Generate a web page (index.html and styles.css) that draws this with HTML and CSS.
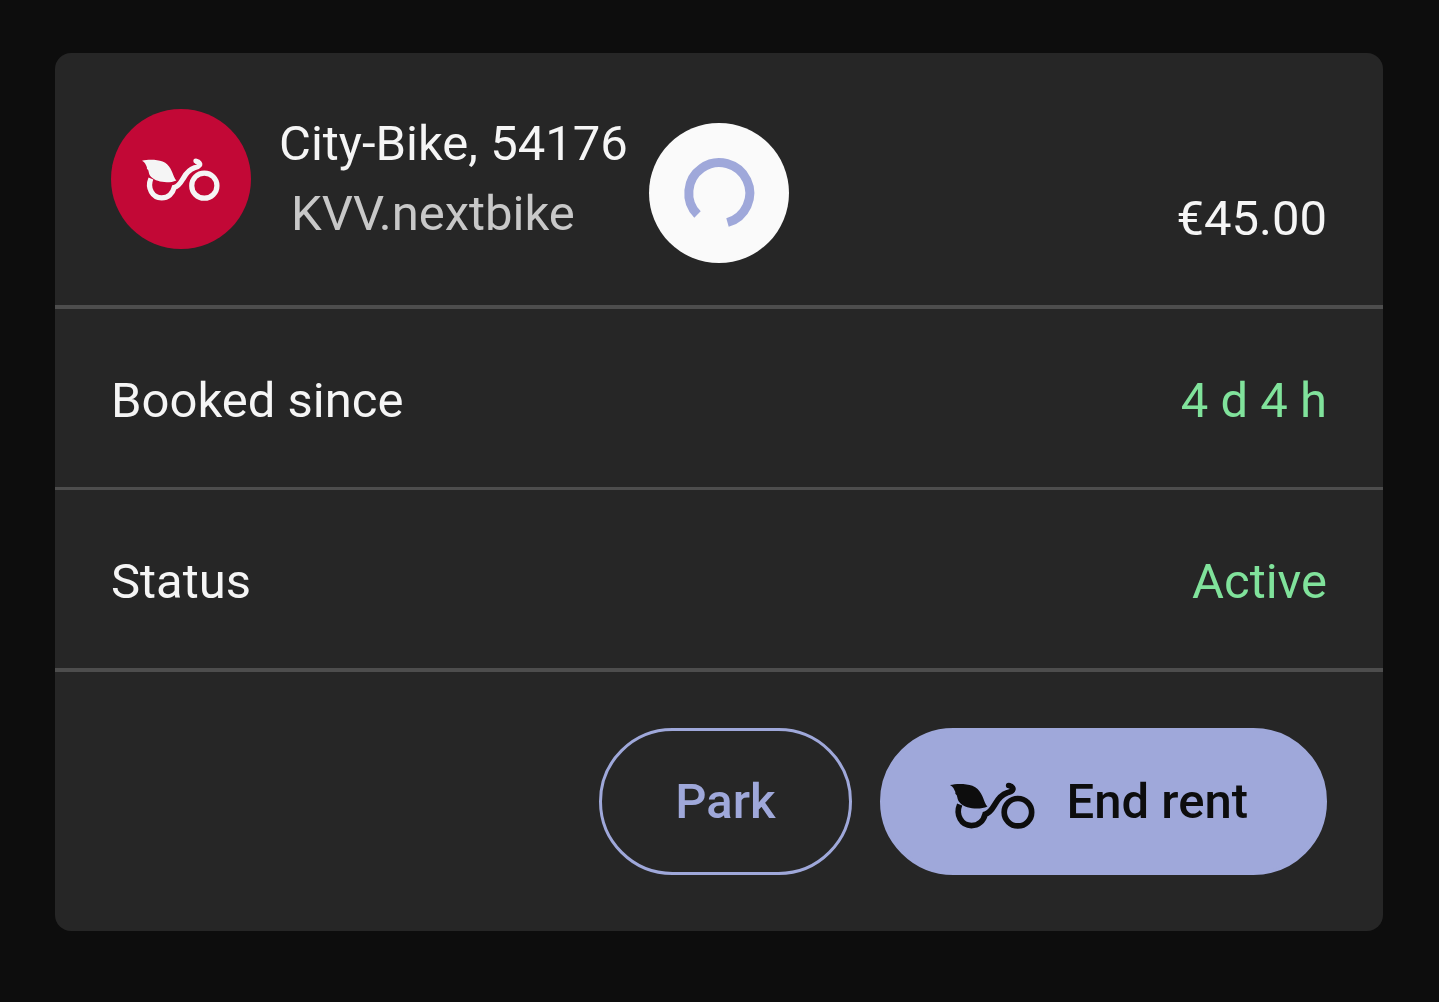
FILE: index.html
```html
<!DOCTYPE html>
<html lang="en">
<head>
  <meta charset="utf-8">
  <meta name="viewport" content="width=device-width, initial-scale=1">
  <title>City-Bike, 54176</title>
  <link rel="stylesheet" href="styles.css">
</head>
<body>
  <svg class="icon-defs" aria-hidden="true">
    <symbol id="bike" viewBox="60 66 254 140">
      <path fill="currentColor" d="M60 75 C78 70 107 70 127 77 C152 87 158 112 164 126 Q167 134 172 139 C145 151 106 144 91 129 C81 119 83 111 80 105 Q74 102 76 96 C72 87 70 80 60 75 Z"/>
      <path fill="none" stroke="currentColor" stroke-width="17" d="M89 133 C76 164 94 196 124 196 C145 196 160 182 165 162 C180 158 187 145 194 133 C203 117 213 104 231 98 C247 94 253 87 243 79 L235 76"/>
      <circle fill="currentColor" cx="235" cy="76" r="8"/>
      <circle fill="none" stroke="currentColor" stroke-width="17" cx="263" cy="156" r="41"/>
    </symbol>
  </svg>

  <main class="card">
    <header class="card-header">
      <div class="avatar">
        <svg class="avatar-icon" aria-hidden="true"><use href="#bike"/></svg>
      </div>
      <div class="title">
        <h1>City-Bike, 54176</h1>
        <p>KVV.nextbike</p>
      </div>
      <div class="price">€45.00</div>
      <div class="loader" role="status" aria-label="Loading">
        <svg viewBox="0 0 140 140" aria-hidden="true">
          <path fill="none" stroke="#9fa8da" stroke-width="9" d="M48.5 91.5 A30.5 30.5 0 1 1 78.5 99.5"/>
        </svg>
      </div>
    </header>

    <dl class="details">
      <div class="row">
        <dt>Booked since</dt>
        <dd>4 d 4 h</dd>
      </div>
      <div class="row">
        <dt>Status</dt>
        <dd>Active</dd>
      </div>
    </dl>

    <div class="actions">
      <button class="btn btn-outline" type="button">Park</button>
      <button class="btn btn-filled" type="button">
        <svg class="btn-icon" aria-hidden="true"><use href="#bike"/></svg>
        End rent
      </button>
    </div>
  </main>
</body>
</html>
```

FILE: styles.css
```css
* {
  box-sizing: border-box;
}
body {
  margin: 0;
  padding: 53px 56px 53px 55px;
  background-color: #0d0d0d;
  color: #f5f5f5;
  font-family: Roboto, sans-serif;
  font-size: 49px;
  line-height: 70px;
}
h1, p, dl, dd {
  margin: 0;
  font-size: inherit;
  font-weight: normal;
}
.icon-defs {
  position: absolute;
  width: 0;
  height: 0;
}
.card {
  background-color: #262626;
  border-radius: 16px;
}
.card-header {
  position: relative;
  display: flex;
  gap: 28px;
  padding: 56px;
  border-bottom: 4px solid #4d4d4d;
}
.avatar {
  display: flex;
  align-items: center;
  justify-content: center;
  width: 140px;
  height: 140px;
  border-radius: 50%;
  background-color: #c20836;
}
.avatar-icon {
  width: 78px;
  height: 43px;
}
.title p {
  padding-left: 12px;
  color: #c8c8c8;
}
.price {
  align-self: flex-end;
  margin-left: auto;
  line-height: 60px;
}
/* spinner floats over the header */
.loader {
  position: absolute;
  top: 70px;
  left: 50%;
  width: 140px;
  height: 140px;
  transform: translateX(-50%);
  border-radius: 50%;
  background-color: #fafafa;
}
.loader svg {
  display: block;
}
.row {
  display: flex;
  justify-content: space-between;
  padding: 57px 56px 51px;
  border-bottom: 3px solid #4d4d4d;
}
.row:last-child {
  border-bottom-width: 4px;
}
.row dd {
  color: #80e29b;
}
.actions {
  display: flex;
  justify-content: flex-end;
  gap: 28px;
  padding: 56px;
}
.btn {
  display: flex;
  align-items: center;
  justify-content: center;
  height: 147px;
  border: 3px solid #9fa8da;
  border-radius: 74px;
  font: inherit;
  font-weight: 500;
  cursor: pointer;
}
.btn-outline {
  padding: 0 73px;
  background-color: transparent;
  color: #9fa8da;
}
.btn-filled {
  gap: 32px;
  padding: 0 76px 0 67px;
  background-color: #9fa8da;
  color: #0d0d0d;
}
.btn-icon {
  width: 85px;
  height: 47px;
  margin-top: 8px;
}
```
